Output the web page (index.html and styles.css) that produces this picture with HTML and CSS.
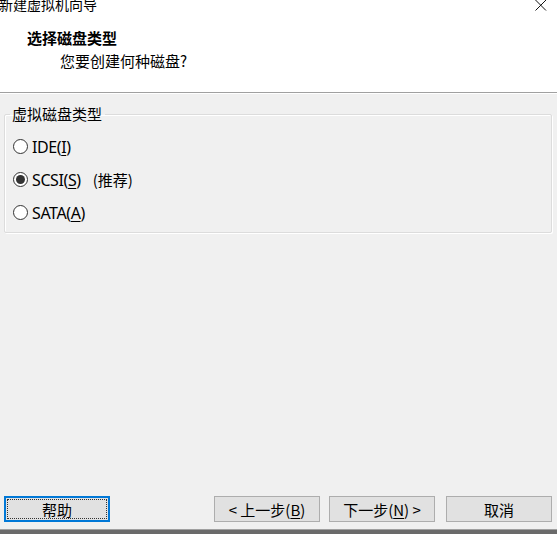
FILE: index.html
```html
<!DOCTYPE html>
<html>
  <head>
    <meta charset="UTF-8">
    <title>新建虚拟机向导</title>
    <link rel="stylesheet" href="styles.css">
  </head>
  <body>
    <div id="header">
        <div class="titlebar">
            <span class="title">新建虚拟机向导</span>
            <svg class="close" width="12" height="11" viewBox="0 0 12 11">
                <path d="M0.5 0 L11 10.5 M11 0 L0.5 10.5" stroke="#111" stroke-width="1" fill="none"/>
            </svg>
        </div>
        <h4>选择磁盘类型</h4>
        <div class="subtitle">您要创建何种磁盘?</div>
    </div>

    <div id="content">
        <fieldset class="group">
            <legend>虚拟磁盘类型</legend>
            <div class="option">
                <span class="radio"></span>
                <span class="opt-label">IDE(<u>I</u>)</span>
            </div>
            <div class="option">
                <span class="radio checked"></span>
                <span class="opt-label">SCSI(<u>S</u>)</span>
                <span class="hint">(推荐)</span>
            </div>
            <div class="option">
                <span class="radio"></span>
                <span class="opt-label">SATA(<u>A</u>)</span>
            </div>
        </fieldset>
    </div>

    <div id="footer">
        <button class="btn focused">帮助</button>
        <div class="right">
            <button class="btn">&lt; 上一步(<u>B</u>)</button>
            <button class="btn next">下一步(<u>N</u>) &gt;</button>
            <button class="btn cancel">取消</button>
        </div>
    </div>
    <div class="frame-bottom"></div>
  </body>
</html>
```

FILE: styles.css
```css
html, body {
    height: 100%;
}

body {
    margin: 0;
    padding: 0;
    height: 534px;
    overflow: hidden;
    display: flex;
    flex-direction: column;
    background-color: #f0f0f0;
    color: #000;
    font-family: "Noto Sans", "Noto Sans CJK SC", sans-serif;
    font-size: 14px;
}

#header {
    height: 92px;
    flex: none;
    background-color: #fff;
    border-bottom: 1px solid #a0a0a0;
    box-shadow: 0 1px 0 #fff;
}

.titlebar {
    height: 12px;
    display: flex;
    justify-content: space-between;
    align-items: flex-start;
    padding-right: 10px;
}

.title {
    font-family: "Noto Sans CJK SC", sans-serif;
    font-size: 14px;
    line-height: 14px;
    margin-top: -3px;
    margin-left: -1px;
}

.close {
    display: block;
    margin-left: auto;
}

h4 {
    margin: 18px 0 0 27px;
    font-family: "Noto Sans CJK SC", sans-serif;
    font-size: 15px;
    line-height: 16px;
    font-weight: bold;
}

.subtitle {
    margin: 7px 0 0 60px;
    font-family: "Noto Sans CJK SC", sans-serif;
    font-size: 15px;
    line-height: 16px;
}

#content {
    padding: 13px 5px 0 4px;
}

.group {
    margin: 0;
    padding: 8px 0 3px 8px;
    border: 1px solid #dcdcdc;
    box-shadow: inset 1px 1px 0 #fff, 1px 1px 0 #fff;
    border-radius: 2px;
}

.group legend {
    margin-left: -3px;
    padding: 0 3px 0 2px;
    font-family: "Noto Sans CJK SC", sans-serif;
    font-size: 15px;
    line-height: 16px;
}

.option {
    height: 33px;
    display: flex;
    align-items: center;
}

.radio {
    width: 15px;
    height: 15px;
    box-sizing: border-box;
    border: 1px solid #333;
    border-radius: 50%;
    background: #fff;
    margin-right: 4px;
    display: flex;
    align-items: center;
    justify-content: center;
}

.radio.checked::after {
    content: "";
    width: 9px;
    height: 9px;
    border-radius: 50%;
    background: #333;
}

.opt-label {
    font-family: "Noto Sans", sans-serif;
    font-size: 16px;
    letter-spacing: -0.4px;
}

.opt-label u, .btn u {
    text-underline-offset: 2px;
}

.hint {
    margin-left: 12px;
    font-family: "Noto Sans CJK SC", sans-serif;
    font-size: 15px;
}

#footer {
    margin-top: auto;
    display: flex;
    justify-content: space-between;
    padding: 0 5px 7px 4px;
}

.right {
    display: flex;
}

.btn {
    width: 106px;
    height: 26px;
    margin: 0;
    padding: 0;
    background: #e1e1e1;
    border: 1px solid #adadad;
    font-family: "Noto Sans CJK SC", sans-serif;
    font-size: 15px;
    color: #000;
}

.btn.focused {
    border: 2px solid #0078d7;
    outline: 1px dotted #333;
    outline-offset: -4px;
}

.btn.next {
    margin-left: 9px;
}

.btn.cancel {
    margin-left: 11px;
}

.frame-bottom {
    height: 4px;
    flex: none;
    border-top: 1px solid #a0a0a0;
    background: #6a6a6a;
}
```
